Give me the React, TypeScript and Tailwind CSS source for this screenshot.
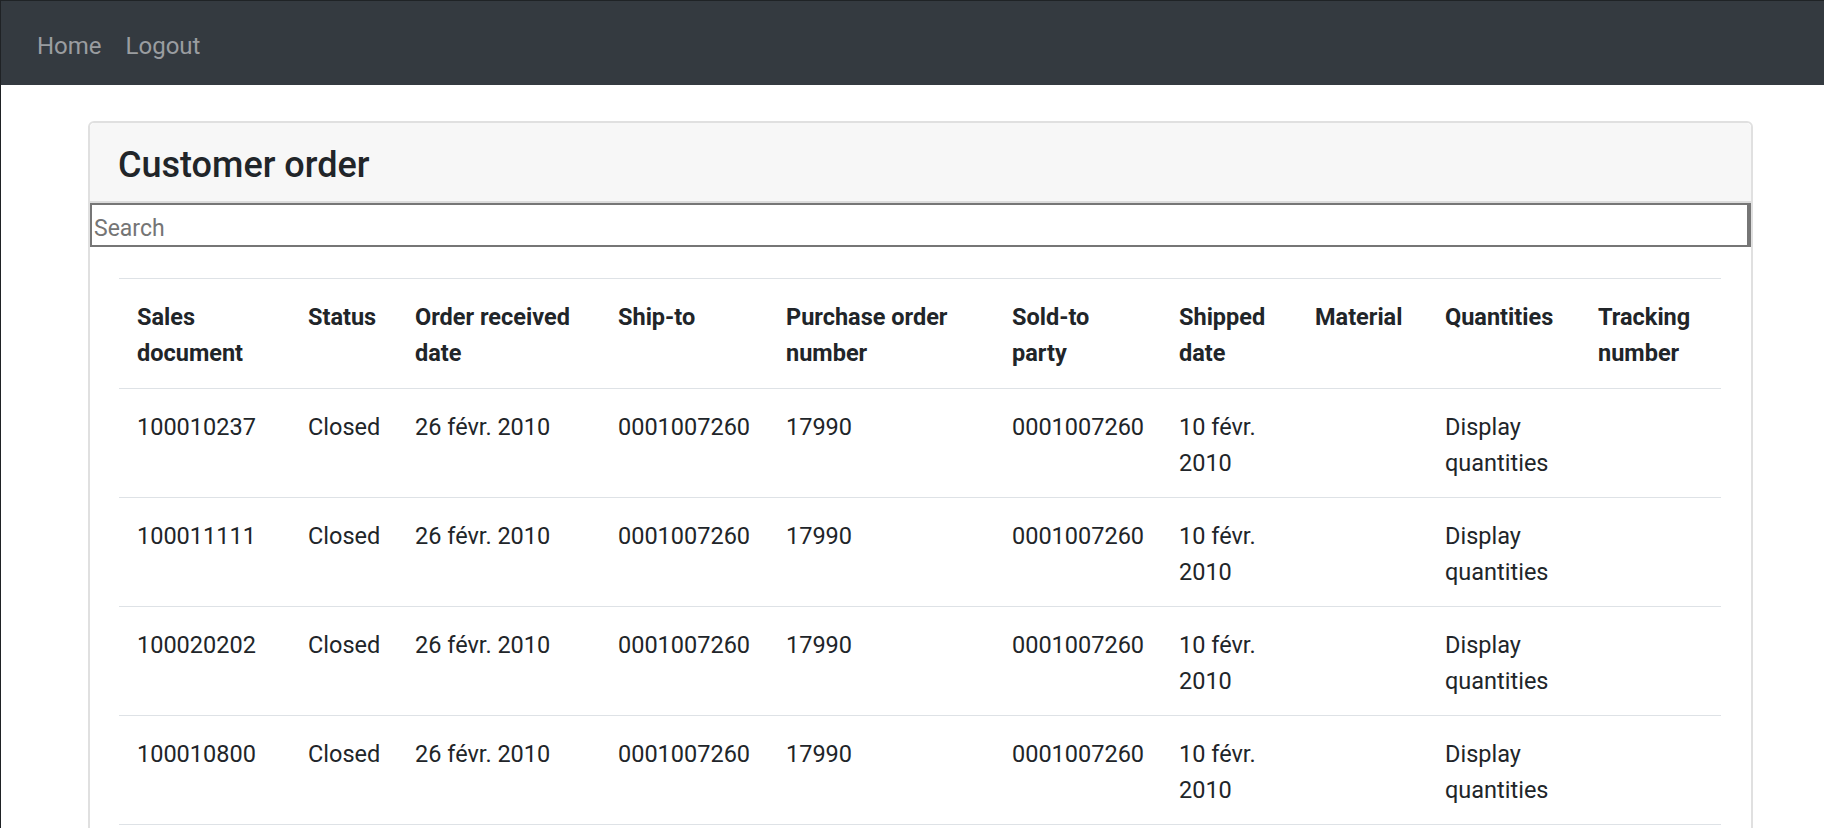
import React from "react";

const font = { fontFamily: "Roboto, 'Open Sans', sans-serif" };

const columns = [
	{ label: ["Sales", "document"], width: "w-[171px]" },
	{ label: ["Status"], width: "w-[107px]" },
	{ label: ["Order received", "date"], width: "w-[203px]" },
	{ label: ["Ship-to"], width: "w-[168px]" },
	{ label: ["Purchase order", "number"], width: "w-[226px]" },
	{ label: ["Sold-to", "party"], width: "w-[167px]" },
	{ label: ["Shipped", "date"], width: "w-[136px]" },
	{ label: ["Material"], width: "w-[130px]" },
	{ label: ["Quantities"], width: "w-[153px]" },
	{ label: ["Tracking", "number"], width: "w-[141px]" },
];

const orders = ["100010237", "100011111", "100020202", "100010800"];

const cell = "align-top px-[18px] pt-[20px] pb-[16px]";

export default function App() {
	return (
		<div
			className="h-[828px] overflow-hidden bg-white border-l border-[#1f2225] text-[#212529]"
			style={font}
		>
			<nav className="h-[85px] bg-[#343a40] border-t border-[#1f2326] flex items-start pt-[27px] pl-[36px]">
				<ul className="flex gap-[24px] text-[24px] leading-[36px] text-[#9a9da0]">
					<li>Home</li>
					<li>Logout</li>
				</ul>
			</nav>

			<div className="ml-[87px] mt-[36px] w-[1665px] border-2 border-[#e0e0e0] rounded-[6px]">
				<div className="bg-[#f7f7f7] border-b-2 border-[#dcdcdc] pl-[28px] pt-[21px] pb-[14px] rounded-t-[5px]">
					<h4 className="text-[36px] leading-[43px] font-medium">Customer order</h4>
				</div>
				<input
					placeholder="Search"
					className="block w-full h-[44px] border-2 border-r-4 border-[#767676] px-[2px] pt-[6px] text-[23px] placeholder:text-[#757575] outline-none"
				/>
				<div className="pl-[29px] pr-[30px] pt-[31px] pb-[30px]">
					<table className="table-fixed w-[1602px] border-collapse text-[23.5px] leading-[36px]">
						<colgroup>
							{columns.map((c, i) => (
								<col key={i} className={c.width} />
							))}
						</colgroup>
						<thead>
							<tr>
								{columns.map((c, i) => (
									<th
										key={i}
										className="text-left align-top font-bold px-[18px] pt-[20px] pb-[17px] border-y border-[#dee2e6] whitespace-nowrap"
									>
										{c.label.map((l, j) => (
											<div key={j}>{l}</div>
										))}
									</th>
								))}
							</tr>
						</thead>
						<tbody>
							{orders.map((o) => (
								<tr key={o} className="border-b border-[#dee2e6]">
									<td className={cell}>{o}</td>
									<td className={cell}>Closed</td>
									<td className={cell + " whitespace-nowrap"}>26 févr. 2010</td>
									<td className={cell}>0001007260</td>
									<td className={cell}>17990</td>
									<td className={cell}>0001007260</td>
									<td className={cell}>
										<div>10 févr.</div>
										<div>2010</div>
									</td>
									<td className={cell}></td>
									<td className={cell}>
										<div>Display</div>
										<div>quantities</div>
									</td>
									<td className={cell}></td>
								</tr>
							))}
						</tbody>
					</table>
				</div>
			</div>
		</div>
	);
}
